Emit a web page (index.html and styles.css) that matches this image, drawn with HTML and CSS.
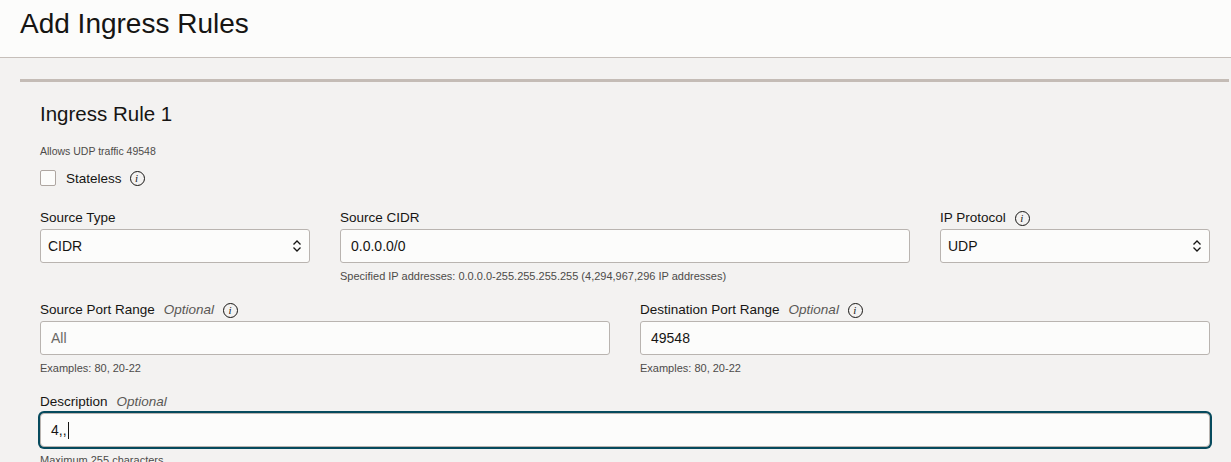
FILE: index.html
```html
<!DOCTYPE html>
<html lang="en">
<head>
<meta charset="utf-8">
<title>Add Ingress Rules</title>
<link rel="stylesheet" href="styles.css">
</head>
<body>
<header class="page-header">
  <h1 class="page-title">Add Ingress Rules</h1>
</header>
<main class="panel">
  <h2 class="rule-title">Ingress Rule 1</h2>
  <p class="rule-desc">Allows UDP traffic 49548</p>
  <div class="check-row">
    <span class="checkbox"></span>
    <span class="check-label">Stateless</span>
    <span class="info">i</span>
  </div>

  <div class="row row-three">
    <div class="field">
      <div class="label"><span>Source Type</span></div>
      <div class="select"><span class="value">CIDR</span>
        <svg class="chev" width="10" height="16" viewBox="0 0 10 16"><polyline points="1.5,6.5 5,3 8.5,6.5" fill="none" stroke="#161513" stroke-width="1.3"/><polyline points="1.5,9.5 5,13 8.5,9.5" fill="none" stroke="#161513" stroke-width="1.3"/></svg>
      </div>
    </div>
    <div class="field">
      <div class="label"><span>Source CIDR</span></div>
      <div class="input"><span class="value">0.0.0.0/0</span></div>
      <div class="help">Specified IP addresses: 0.0.0.0-255.255.255.255 (4,294,967,296 IP addresses)</div>
    </div>
    <div class="field">
      <div class="label"><span>IP Protocol</span><span class="info">i</span></div>
      <div class="select"><span class="value">UDP</span>
        <svg class="chev" width="10" height="16" viewBox="0 0 10 16"><polyline points="1.5,6.5 5,3 8.5,6.5" fill="none" stroke="#161513" stroke-width="1.3"/><polyline points="1.5,9.5 5,13 8.5,9.5" fill="none" stroke="#161513" stroke-width="1.3"/></svg>
      </div>
    </div>
  </div>

  <div class="row row-two">
    <div class="field">
      <div class="label"><span>Source Port Range</span><span class="opt">Optional</span><span class="info">i</span></div>
      <div class="input"><span class="placeholder">All</span></div>
      <div class="help">Examples: 80, 20-22</div>
    </div>
    <div class="field">
      <div class="label"><span>Destination Port Range</span><span class="opt">Optional</span><span class="info">i</span></div>
      <div class="input"><span class="value">49548</span></div>
      <div class="help">Examples: 80, 20-22</div>
    </div>
  </div>

  <div class="row">
    <div class="field">
      <div class="label"><span>Description</span><span class="opt">Optional</span></div>
      <div class="input focused"><span class="value">4,,</span><span class="caret"></span></div>
      <div class="help">Maximum 255 characters</div>
    </div>
  </div>
</main>
</body>
</html>
```

FILE: styles.css
```css
* { box-sizing: border-box; }

html, body {
  margin: 0;
  padding: 0;
}

body {
  background: #f3f2f1;
  color: #161513;
  font-family: "Liberation Sans", Arial, sans-serif;
  overflow: hidden;
  height: 462px;
}

.page-header {
  background: #fcfcfb;
  height: 58px;
  border-bottom: 1px solid #c6bfba;
  padding: 8px 0 0 20px;
}

.page-title {
  margin: 0;
  font-size: 28px;
  line-height: 32px;
  font-weight: 400;
  color: #161513;
}

.panel {
  margin: 21px 2px 0 20px;
  border-top: 3px solid #c4bcb6;
  padding: 20px 19px 0 20px;
}

.rule-title {
  margin: 0;
  font-size: 20.5px;
  line-height: 24px;
  font-weight: 400;
}

.rule-desc {
  margin: 18px 0 0 0;
  font-size: 10.5px;
  line-height: 14px;
  color: #4d4b49;
}

.check-row {
  margin-top: 12px;
  height: 16px;
  display: flex;
  align-items: center;
}

.checkbox {
  width: 16px;
  height: 16px;
  border: 1px solid #aea6a1;
  border-radius: 2px;
  background: #fcfcfb;
}

.check-label {
  margin-left: 10px;
  font-size: 13.5px;
  line-height: 16px;
  padding-top: 1px;
}

.info {
  display: inline-flex;
  align-items: center;
  justify-content: center;
  width: 15px;
  height: 15px;
  border: 1px solid #161513;
  border-radius: 50%;
  font-family: "Liberation Serif", "Times New Roman", serif;
  font-style: italic;
  font-size: 11px;
  line-height: 1;
  margin-left: 8px;
  padding-right: 1px;
}

.label .info { margin-left: 9px; }

.row {
  display: grid;
  column-gap: 30px;
  margin-top: 18px;
}

.check-row + .row { margin-top: 23px; }

.row-three { grid-template-columns: 270px 1fr 270px; }
.row-two { grid-template-columns: 1fr 1fr; }

.field {
  display: flex;
  flex-direction: column;
  min-height: 74px;
}

.label {
  display: flex;
  align-items: center;
  height: 16px;
  font-size: 13.5px;
  line-height: 16px;
  margin-top: 1px;
  margin-bottom: 3px;
}

.opt {
  font-style: italic;
  color: #5a5855;
  margin-left: 9px;
}

.input, .select {
  height: 34px;
  border: 1px solid #b9b4b0;
  border-radius: 3px;
  background: #fcfcfb;
  display: flex;
  align-items: center;
  font-size: 14px;
}

.input { padding: 0 10px; }
.select { padding: 0 7px; justify-content: space-between; }

.chev { flex: none; }

.placeholder { color: #6a6865; }

.input.focused {
  box-shadow: 0 0 0 2px #064a5d;
  border-radius: 4px;
}

.caret {
  width: 1px;
  height: 17px;
  background: #161513;
  margin-left: 1px;
}

.help {
  margin-top: 6px;
  font-size: 11px;
  line-height: 14px;
  color: #4d4b49;
}
```
